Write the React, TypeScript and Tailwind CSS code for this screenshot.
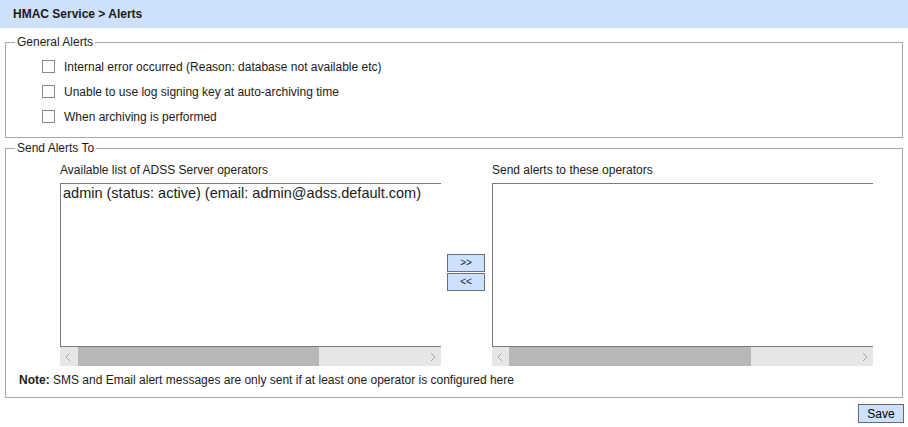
const ui = { fontFamily: '"Liberation Sans", Arial, sans-serif' };

type Alert = { id: string; label: string };

const alerts: Alert[] = [
  { id: "internal", label: "Internal error occurred (Reason: database not available etc)" },
  { id: "signing", label: "Unable to use log signing key at auto-archiving time" },
  { id: "archiving", label: "When archiving is performed" },
];

const Check = () => (
  <span className="inline-block w-[13px] h-[13px] border border-[#8a8a8a] bg-white shrink-0" />
);

const Chevron = ({ dir }: { dir: "left" | "right" }) => (
  <svg width="6" height="10" viewBox="0 0 6 10" className="shrink-0">
    <path
      d={dir === "left" ? "M5 1 L1 5 L5 9" : "M1 1 L5 5 L1 9"}
      fill="none"
      stroke="#a6a6a6"
      strokeWidth="1"
    />
  </svg>
);

const FakeScroll = ({ thumbLeft, thumbWidth }: { thumbLeft: number; thumbWidth: number }) => (
  <div className="relative h-[19px] bg-[#e6e6e6] flex items-center justify-between px-[5px]">
    <Chevron dir="left" />
    <div
      className="absolute top-0 h-full bg-[#b7b7b7]"
      style={{ left: thumbLeft, width: thumbWidth }}
    />
    <Chevron dir="right" />
  </div>
);

const OperatorList = ({
  title,
  items,
  thumbLeft,
  thumbWidth,
}: {
  title: string;
  items: string[];
  thumbLeft: number;
  thumbWidth: number;
}) => (
  <div className="flex flex-col w-[381px]">
    <div className="h-[14px] leading-[14px] text-[12px] mb-[6px]">{title}</div>
    <div className="h-[164px] border-y border-l border-[#7a7a7a] bg-white pt-[1px] pl-[2px]">
      {items.map((it) => (
        <div key={it} className="text-[14.5px] leading-[17px] whitespace-nowrap">
          {it}
        </div>
      ))}
    </div>
    <FakeScroll thumbLeft={thumbLeft} thumbWidth={thumbWidth} />
  </div>
);

const MoveButton = ({ label }: { label: string }) => (
  <button className="w-[38px] h-[18px] bg-[#cce0ff] border border-[#6f6f6f] text-[10px] leading-[14px] text-[#222]">
    {label}
  </button>
);

export default function App() {
  return (
    <div className="w-[908px] h-[427px] bg-white text-[#1b1b1b]" style={ui}>
      <div className="h-[28px] bg-[#cde0fc] flex items-center pl-[13px] text-[12px] font-bold">
        HMAC Service &gt; Alerts
      </div>

      <fieldset className="mx-[5px] mt-[7px] border border-[#a8a8a8] pl-[9px] pb-[8px]">
        <legend className="px-[2px] text-[12px] leading-[14px]">General Alerts</legend>
        <div className="flex flex-col pt-[5px]">
          {alerts.map((a) => (
            <label key={a.id} className="h-[25px] flex items-center pl-[27px] gap-[9px] text-[12px]">
              <Check />
              <span>{a.label}</span>
            </label>
          ))}
        </div>
      </fieldset>

      <fieldset className="mx-[5px] mt-[3px] border border-[#a8a8a8] pl-[9px] pb-[10px]">
        <legend className="px-[2px] text-[12px] leading-[14px]">Send Alerts To</legend>
        <div className="flex items-stretch pl-[45px] pt-[8px]">
          <OperatorList
            title="Available list of ADSS Server operators"
            items={["admin (status: active) (email: admin@adss.default.com)"]}
            thumbLeft={18}
            thumbWidth={241}
          />
          <div className="w-[51px] flex flex-col items-start pl-[6px] pt-[91px] gap-[1px]">
            <MoveButton label=">>" />
            <MoveButton label="<<" />
          </div>
          <OperatorList
            title="Send alerts to these operators"
            items={[]}
            thumbLeft={17}
            thumbWidth={242}
          />
        </div>
        <div className="mt-[7px] pl-[4px] text-[12px] leading-[14px]">
          <span className="font-bold">Note:</span> SMS and Email alert messages are only sent if at least one
          operator is configured here
        </div>
      </fieldset>

      <div className="flex justify-end pr-[4px] pt-[6px]">
        <button className="w-[46px] h-[19px] bg-[#cce0ff] border border-[#6a6a6a] text-[12px] leading-[16px] text-black">
          Save
        </button>
      </div>
    </div>
  );
}
